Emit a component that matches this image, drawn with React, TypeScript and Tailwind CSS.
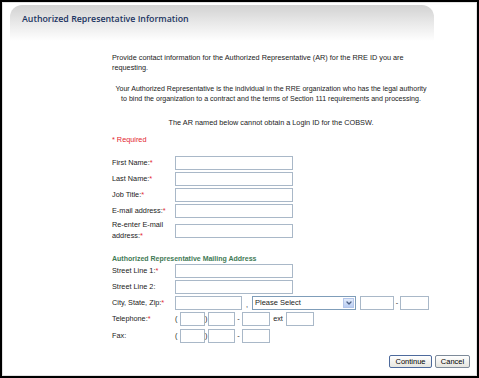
import { ChevronDown } from 'lucide-react';

const font = "font-['Liberation_Sans',Arial,sans-serif]";

function Req() {
  return <span className="text-[#e3262f]">*</span>;
}

function Box({ w }: { w: string }) {
  return <div className={`${w} h-[14px] border border-[#a9b8c8] bg-white`} />;
}

function Row({ label, req, children, tall }: { label: string; req?: boolean; children: React.ReactNode; tall?: boolean }) {
  return (
    <div className={`flex items-center ${tall ? 'h-[21px]' : 'h-[14px]'}`}>
      <div className="w-[63px] shrink-0 leading-[10.5px]">
        {label}
        {req && <Req />}
      </div>
      {children}
    </div>
  );
}

export default function App() {
  return (
    <div className={`w-[479px] h-[378px] border-2 border-black bg-white ${font} text-[7.3px] text-[#222]`}>
      <div className="h-full border border-[#e2e2e2] flex flex-col">
        {/* Header tab */}
        <div className="mt-[2px] ml-[7px] w-[424px] h-[36px] rounded-t-[12px] bg-gradient-to-b from-[#d2d2d2] via-[#e9e9e9] to-white">
          <div className="pl-[12px] pt-[8px] font-['Open_Sans',sans-serif] font-semibold text-[8.8px] text-[#1b3461] leading-[12px]">
            Authorized Representative Information
          </div>
        </div>

        {/* Intro text */}
        <div className="ml-[109px] w-[318px] mt-[12px] leading-[10px]">
          <p>Provide contact information for the Authorized Representative (AR) for the RRE ID you are requesting.</p>
          <p className="mt-[11px] text-center whitespace-nowrap text-[7.05px]">
            Your Authorized Representative is the individual in the RRE organization who has the legal authority
            <br />
            to bind the organization to a contract and the terms of Section 111 requirements and processing.
          </p>
          <p className="mt-[14px] text-center">The AR named below cannot obtain a Login ID for the COBSW.</p>
          <p className="mt-[7px] text-[#e3262f]">* Required</p>

          {/* Contact fields */}
          <div className="mt-[11px] flex flex-col gap-[2px]">
            <Row label="First Name:" req><Box w="w-[118px]" /></Row>
            <Row label="Last Name:" req><Box w="w-[118px]" /></Row>
            <Row label="Job Title:" req><Box w="w-[118px]" /></Row>
            <Row label="E-mail address:" req><Box w="w-[118px]" /></Row>
            <Row label="Re-enter E-mail address:" req tall><Box w="w-[118px]" /></Row>
          </div>

          <div className="mt-[13px] font-bold text-[7px] text-[#3f7a55] leading-[10px]">Authorized Representative Mailing Address</div>

          {/* Mailing address */}
          <div className="flex flex-col gap-[2px]">
            <Row label="Street Line 1:" req><Box w="w-[118px]" /></Row>
            <Row label="Street Line 2:"><Box w="w-[118px]" /></Row>
            <Row label="City, State, Zip:" req>
              <Box w="w-[67px]" />
              <span className="w-[10px] text-center pt-[3px]">,</span>
              <div className="w-[104px] h-[14px] border border-[#7f9db9] bg-white flex items-center justify-between pl-[2px] pr-[1px]">
                <span className="text-[7.5px]">Please Select</span>
                <span className="w-[11px] h-[10px] bg-gradient-to-b from-[#e2ebfb] to-[#b9cdf2] border border-[#b4c6ea] flex items-center justify-center">
                  <ChevronDown className="w-[8px] h-[8px] text-[#4d6185]" strokeWidth={4} />
                </span>
              </div>
              <div className="w-[4px]" />
              <Box w="w-[34px]" />
              <span className="w-[6px] text-center">-</span>
              <Box w="w-[29px]" />
            </Row>
            <Row label="Telephone:" req>
              <span className="w-[5px]">(</span>
              <Box w="w-[25px]" />
              <span className="w-[3px]">)</span>
              <Box w="w-[27px]" />
              <span className="w-[7px] text-center">-</span>
              <Box w="w-[28px]" />
              <span className="w-[16px] text-center">ext</span>
              <Box w="w-[28px]" />
            </Row>
            <div className="mt-[1px]">
              <Row label="Fax:">
                <span className="w-[5px]">(</span>
                <Box w="w-[25px]" />
                <span className="w-[3px]">)</span>
                <Box w="w-[27px]" />
                <span className="w-[7px] text-center">-</span>
                <Box w="w-[28px]" />
              </Row>
            </div>
          </div>
        </div>

        {/* Buttons */}
        <div className="mt-[12px] flex justify-end gap-[3px] pr-[6px]">
          <button className="w-[43px] h-[13px] border border-[#4d6a9c] rounded-[2px] bg-gradient-to-b from-white to-[#e6e6e0] text-[7.5px] leading-[11px] text-black">
            Continue
          </button>
          <button className="w-[35px] h-[13px] border border-[#7d8a99] rounded-[2px] bg-gradient-to-b from-white to-[#e6e6e0] text-[7.5px] leading-[11px] text-black">
            Cancel
          </button>
        </div>
      </div>
    </div>
  );
}
